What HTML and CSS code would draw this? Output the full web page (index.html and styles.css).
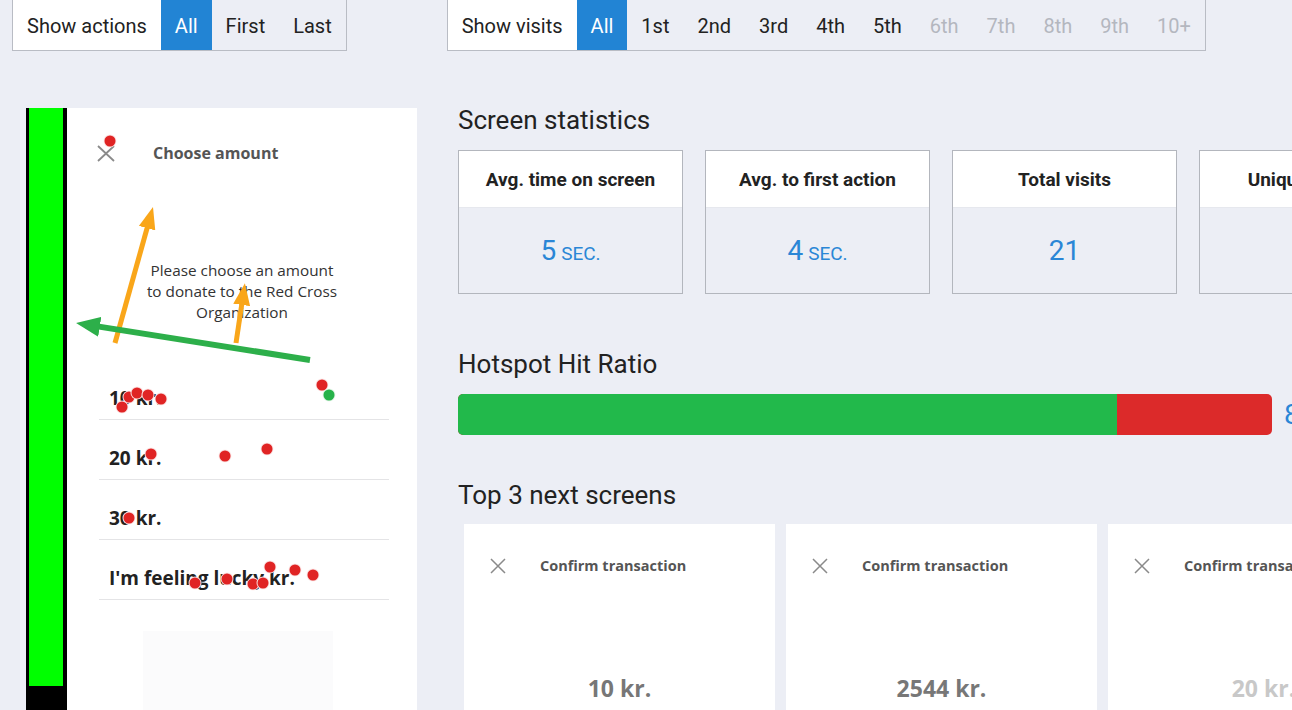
FILE: index.html
```html
<!DOCTYPE html>
<html lang="en">
<head>
  <meta charset="UTF-8">
  <title>Screen statistics</title>
  <link rel="stylesheet" href="styles.css">
</head>
<body>
  <div class="toolbar">
    <div class="filter">
      <div class="filter-label">Show actions</div>
      <div class="filter-item active">All</div>
      <div class="filter-item">First</div>
      <div class="filter-item">Last</div>
    </div>
    <div class="filter visits">
      <div class="filter-label">Show visits</div>
      <div class="filter-item active">All</div>
      <div class="filter-item">1st</div>
      <div class="filter-item">2nd</div>
      <div class="filter-item">3rd</div>
      <div class="filter-item">4th</div>
      <div class="filter-item">5th</div>
      <div class="filter-item muted">6th</div>
      <div class="filter-item muted">7th</div>
      <div class="filter-item muted">8th</div>
      <div class="filter-item muted">9th</div>
      <div class="filter-item muted">10+</div>
    </div>
  </div>

  <div class="main">
    <div class="phone" id="phone">
      <div class="phone-rail"></div>
      <div class="phone-screen">
        <div class="app-header">
          <svg class="close-icon" width="18" height="17" viewBox="0 0 18 17"><path d="M1 1 L17 16 M17 1 L1 16" stroke="#8a8a8a" stroke-width="1.8" fill="none"/></svg>
          <span class="app-title">Choose amount</span>
        </div>
        <p class="app-text">Please choose an amount<br>to donate to the Red Cross<br>Organization</p>
        <ul class="amount-list">
          <li>10 kr.</li>
          <li>20 kr.</li>
          <li>30 kr.</li>
          <li>I'm feeling lucky kr.</li>
        </ul>
        <div class="app-button"></div>
      </div>
      <svg class="arrows" width="391" height="620" viewBox="0 0 391 620">
        <defs>
          <marker id="headOrange" markerUnits="userSpaceOnUse" markerWidth="22" markerHeight="17" refX="9" refY="8.5" orient="auto">
            <path d="M0,0 L22,8.5 L0,17 z" fill="#f9a61a"/>
          </marker>
          <marker id="headGreen" markerUnits="userSpaceOnUse" markerWidth="24" markerHeight="20" refX="12" refY="10" orient="auto">
            <path d="M0,0 L24,10 L0,20 z" fill="#2daf4a"/>
          </marker>
        </defs>
        <line x1="89" y1="235" x2="123.5" y2="111.5" stroke="#f9a61a" stroke-width="5" marker-end="url(#headOrange)"/>
        <line x1="210" y1="235" x2="217" y2="188" stroke="#f9a61a" stroke-width="5" marker-end="url(#headOrange)"/>
        <line x1="284" y1="252" x2="61.9" y2="216.9" stroke="#2daf4a" stroke-width="6" marker-end="url(#headGreen)"/>
      </svg>
    </div>

    <div class="stats">
      <h2 class="section-title">Screen statistics</h2>
      <div class="stat-row">
        <div class="stat">
          <div class="stat-head">Avg. time on screen</div>
          <div class="stat-value">5 <small>sec.</small></div>
        </div>
        <div class="stat">
          <div class="stat-head">Avg. to first action</div>
          <div class="stat-value">4 <small>sec.</small></div>
        </div>
        <div class="stat">
          <div class="stat-head">Total visits</div>
          <div class="stat-value">21</div>
        </div>
        <div class="stat">
          <div class="stat-head">Unique visitors</div>
          <div class="stat-value">12</div>
        </div>
      </div>

      <h2 class="section-title hotspot-title">Hotspot Hit Ratio</h2>
      <div class="ratio">
        <div class="ratio-bar">
          <div class="ratio-hit" style="width: 81%"></div>
        </div>
        <span class="ratio-value">81%</span>
      </div>

      <h2 class="section-title next-title">Top 3 next screens</h2>
      <div class="next-row">
        <div class="next-card">
          <div class="next-head">
            <svg width="16" height="16" viewBox="0 0 16 16"><path d="M1 1 L15 15 M15 1 L1 15" stroke="#8a8a8a" stroke-width="1.5" fill="none"/></svg>
            <span>Confirm transaction</span>
          </div>
          <div class="next-amount">10 kr.</div>
        </div>
        <div class="next-card">
          <div class="next-head">
            <svg width="16" height="16" viewBox="0 0 16 16"><path d="M1 1 L15 15 M15 1 L1 15" stroke="#8a8a8a" stroke-width="1.5" fill="none"/></svg>
            <span>Confirm transaction</span>
          </div>
          <div class="next-amount">2544 kr.</div>
        </div>
        <div class="next-card">
          <div class="next-head">
            <svg width="16" height="16" viewBox="0 0 16 16"><path d="M1 1 L15 15 M15 1 L1 15" stroke="#8a8a8a" stroke-width="1.5" fill="none"/></svg>
            <span>Confirm transaction</span>
          </div>
          <div class="next-amount faded">20 kr.</div>
        </div>
      </div>
    </div>
  </div>

  <script>
    // taps recorded on the screen, relative to the phone frame
    const taps = [
      [84, 33], [96, 299], [103, 289], [111, 285], [122, 287], [135, 291],
      [296, 277], [303, 287, 'hit'],
      [125, 346], [199, 348], [241, 341],
      [103, 410],
      [169, 475], [201, 471], [227, 476], [237, 475], [244, 459], [269, 462], [287, 467]
    ];
    const phone = document.getElementById('phone');
    taps.forEach(([x, y, kind]) => {
      let dot = document.createElement('span');
      dot.classList.add('tap');
      if (kind) dot.classList.add(kind);
      dot.style.left = x + 'px';
      dot.style.top = y + 'px';
      phone.appendChild(dot);
    });
  </script>
</body>
</html>
```

FILE: styles.css
```css
* {
  box-sizing: border-box;
}
body {
  margin: 0;
  width: 1292px;
  height: 710px;
  overflow: hidden;
  background: #eceef5;
  font-family: Roboto, "Liberation Sans", sans-serif;
  color: #222;
}

.toolbar {
  display: flex;
  padding-left: 12px;
}
.filter {
  display: flex;
  height: 52px;
  margin-top: -1px;
  border: 1px solid #b9bcc4;
  font-size: 20px;
}
.filter.visits {
  margin-left: 100px;
}
.filter-label {
  display: flex;
  align-items: center;
  padding: 1px 14px 0;
  background: #fff;
  color: #222;
}
.filter-item {
  display: flex;
  align-items: center;
  padding: 1px 14px 0;
  color: #222;
}
.filter-item.active {
  background: #2284d4;
  color: #fff;
}
.filter-item.muted {
  color: #b4b7bf;
}

.main {
  display: flex;
  gap: 41px;
  padding: 54px 0 0 26px;
}

.phone {
  position: relative;
  display: flex;
  flex: 0 0 391px;
  height: 620px;
  margin-top: 3px;
  background: #000;
}
.phone-rail {
  width: 34px;
  height: 578px;
  margin-left: 3px;
  background: #00ff00;
}
.phone-screen {
  flex: 1;
  margin-left: 4px;
  background: #fff;
  font-family: "Open Sans", "DejaVu Sans", sans-serif;
}
.app-header {
  display: flex;
  align-items: center;
  height: 90px;
  padding-left: 30px;
}
.app-title {
  margin-left: 38px;
  font-size: 16px;
  font-weight: 700;
  color: #555;
}
.app-text {
  margin: 62px 0 0;
  text-align: center;
  font-size: 15.3px;
  line-height: 21px;
  color: #333;
}
.amount-list {
  list-style: none;
  margin: 37px 28px 0 32px;
  padding: 0;
}
.amount-list li {
  height: 60px;
  padding: 26px 10px 0;
  border-bottom: 1px solid #e4e4e6;
  font-size: 19px;
  line-height: 24px;
  font-weight: 700;
  color: #222;
}
.app-button {
  width: 190px;
  height: 100px;
  margin: 31px 0 0 76px;
  background: #fbfbfc;
}

.arrows {
  position: absolute;
  left: 0;
  top: 0;
  pointer-events: none;
}
.tap {
  position: absolute;
  width: 13px;
  height: 13px;
  border-radius: 50%;
  background: #e02424;
  border: 1.5px solid rgba(255, 255, 255, 0.85);
  transform: translate(-50%, -50%);
}
.tap.hit {
  background: #27b24a;
}

.stats {
  flex: 1;
  min-width: 0;
  overflow: hidden;
}
.section-title {
  margin: 0 0 15px;
  font-size: 26px;
  line-height: 30px;
  font-weight: 400;
  color: #222;
}
.stat-row {
  display: flex;
  gap: 22px;
}
.stat {
  flex: 0 0 225px;
  height: 144px;
  border: 1.5px solid #b3b6bd;
}
.stat-head {
  display: flex;
  align-items: center;
  justify-content: center;
  height: 57px;
  background: #fff;
  border-bottom: 1px solid #e6e8ee;
  font-size: 19px;
  font-weight: 700;
  color: #222;
}
.stat-value {
  display: flex;
  align-items: baseline;
  justify-content: center;
  gap: 5px;
  padding-top: 26px;
  font-size: 28px;
  color: #2a86d6;
}
.stat-value small {
  font-size: 19px;
  text-transform: uppercase;
}

.hotspot-title {
  margin-top: 55px;
}
.ratio {
  display: flex;
  align-items: center;
  gap: 12px;
}
.ratio-bar {
  flex: 0 0 814px;
  height: 41px;
  border-radius: 5px;
  overflow: hidden;
  background: #dc2a2a;
}
.ratio-hit {
  height: 100%;
  background: #22b94b;
}
.ratio-value {
  font-size: 28px;
  color: #2a86d6;
  white-space: nowrap;
}

.next-title {
  margin-top: 45px;
  margin-bottom: 14px;
}
.next-row {
  display: flex;
  gap: 11px;
  margin-left: 6px;
}
.next-card {
  flex: 0 0 311px;
  height: 200px;
  background: #fff;
  font-family: "Open Sans", "DejaVu Sans", sans-serif;
}
.next-head {
  display: flex;
  align-items: center;
  gap: 34px;
  padding: 32px 0 0 26px;
  font-size: 14.5px;
  font-weight: 700;
  color: #555;
}
.next-amount {
  margin-top: 97px;
  text-align: center;
  font-size: 23px;
  font-weight: 700;
  color: #777;
}
.next-amount.faded {
  color: #c8c8c8;
}
```
